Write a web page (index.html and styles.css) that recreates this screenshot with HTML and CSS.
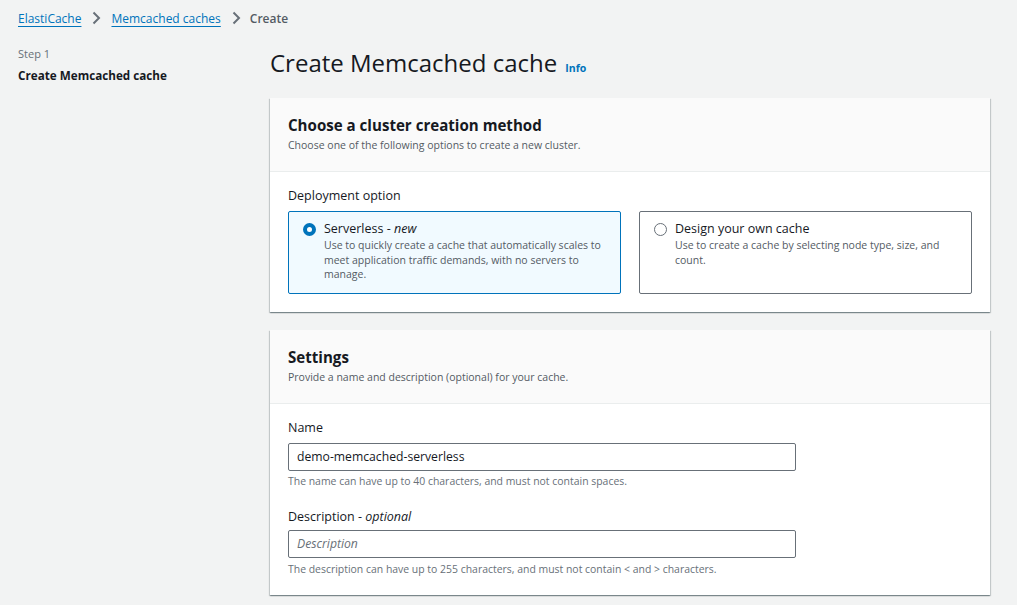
FILE: index.html
```html
<!DOCTYPE html>
<html>
<head>
<meta charset="utf-8">
<link rel="stylesheet" href="styles.css">
</head>
<body>
<nav class="crumbs">
  <a href="#" class="crumb-link">ElastiCache</a>
  <svg class="chev" width="16" height="16" viewBox="0 0 16 16"><path d="M5.5 2.5 11 8l-5.5 5.5" fill="none" stroke="#687078" stroke-width="2"/></svg>
  <a href="#" class="crumb-link">Memcached caches</a>
  <svg class="chev chev-last" width="16" height="16" viewBox="0 0 16 16"><path d="M5.5 2.5 11 8l-5.5 5.5" fill="none" stroke="#687078" stroke-width="2"/></svg>
  <span class="crumb-current">Create</span>
</nav>
<div class="layout">
  <aside class="steps">
    <div class="step-num">Step 1</div>
    <div class="step-title">Create Memcached cache</div>
  </aside>
  <main class="main">
    <div class="page-head">
      <h1 class="page-title">Create Memcached cache</h1>
      <a href="#" class="info">Info</a>
    </div>
    <section class="card">
      <header class="card-head">
        <h2 class="card-title">Choose a cluster creation method</h2>
        <p class="card-desc">Choose one of the following options to create a new cluster.</p>
      </header>
      <div class="card-body card-body-1">
        <div class="label">Deployment option</div>
        <div class="tiles">
          <div class="tile tile-selected">
            <span class="radio radio-on"></span>
            <div class="tile-text">
              <div class="tile-label">Serverless - <em>new</em></div>
              <div class="tile-desc">Use to quickly create a cache that automatically scales to meet application traffic demands, with no servers to manage.</div>
            </div>
          </div>
          <div class="tile">
            <span class="radio"></span>
            <div class="tile-text">
              <div class="tile-label">Design your own cache</div>
              <div class="tile-desc">Use to create a cache by selecting node type, size, and count.</div>
            </div>
          </div>
        </div>
      </div>
    </section>
    <section class="card">
      <header class="card-head">
        <h2 class="card-title">Settings</h2>
        <p class="card-desc">Provide a name and description (optional) for your cache.</p>
      </header>
      <div class="card-body card-body-2">
        <div class="field">
          <div class="label">Name</div>
          <div class="input">demo-memcached-serverless</div>
          <div class="hint">The name can have up to 40 characters, and must not contain spaces.</div>
        </div>
        <div class="field field-2">
          <div class="label">Description - <em>optional</em></div>
          <div class="input placeholder">Description</div>
          <div class="hint">The description can have up to 255 characters, and must not contain &lt; and &gt; characters.</div>
        </div>
      </div>
    </section>
  </main>
</div>
</body>
</html>
```
FILE: styles.css
```css
* { box-sizing: border-box; }
html, body { margin: 0; padding: 0; }
body {
  background: #f2f3f3;
  font-family: "Open Sans", "Noto Sans", sans-serif;
  color: #16191f;
  width: 1017px;
  height: 605px;
  overflow: hidden;
}
.crumbs {
  display: flex;
  align-items: center;
  padding: 9px 0 0 18px;
  height: 27px;
  font-size: 12px;
}
.crumb-link {
  color: #0073bb;
  text-decoration: underline;
  text-underline-offset: 3px;
}
.chev { margin: 0 7px 0 7px; }
.chev-last { margin-right: 6px; }
.crumb-current { color: #545b64; font-weight: 600; }
.layout {
  display: flex;
  padding-top: 19px;
}
.steps {
  width: 270px;
  padding-left: 18px;
}
.step-num { font-size: 11px; color: #687078; line-height: 15px; }
.step-title { font-size: 11.7px; font-weight: 700; margin-top: 6px; line-height: 16px; }
.main { width: 720px; }
.page-head {
  display: flex;
  align-items: baseline;
  gap: 8px;
  height: 52px;
}
.page-title {
  margin: 0;
  font-size: 24px;
  font-weight: 400;
  line-height: 34px;
}
.info { color: #0073bb; font-size: 10.5px; font-weight: 700; text-decoration: none; }
.card {
  background: #fff;
  box-shadow: 0 1px 1px 0 rgba(0,28,36,.3), 1px 1px 1px 0 rgba(0,28,36,.15), -1px 1px 1px 0 rgba(0,28,36,.15);
  margin-bottom: 18px;
}
.card-head {
  background: #fafafa;
  border-bottom: 1px solid #eaeded;
  padding: 17px 18px 0;
  height: 74px;
}
.card-title { margin: 0; font-size: 15.1px; font-weight: 700; line-height: 20px; }
.card-desc { margin: 2px 0 0; font-size: 10.5px; color: #545b64; line-height: 16px; }
.card-body { padding: 0 18px; }
.card-body-1 { padding-top: 15px; height: 140px; }
.card-body-2 { padding-top: 15px; height: 191px; }
.label { font-size: 12.5px; line-height: 18px; color: #16191f; }
.tiles {
  display: grid;
  grid-template-columns: 1fr 1fr;
  gap: 18px;
  margin-top: 6px;
}
.tile {
  border: 1px solid #687078;
  border-radius: 2px;
  height: 83px;
  display: flex;
  padding: 8px 14px 0 14px;
  gap: 8px;
}
.tile-selected { background: #f1faff; border-color: #0073bb; }
.radio {
  width: 13px; height: 13px;
  border-radius: 50%;
  border: 1px solid #687078;
  margin-top: 3px;
  flex: none;
  background: #fff;
}
.radio-on { border: 4px solid #0073bb; }
.tile-label { font-size: 12.5px; line-height: 18px; }
.tile-desc { font-size: 10.5px; line-height: 14.5px; color: #545b64; margin-top: 0; }
.input {
  width: 508px;
  height: 28px;
  border: 1px solid #687078;
  border-radius: 2px;
  margin-top: 6px;
  padding: 0 8px;
  font-size: 12.2px;
  line-height: 26px;
  background: #fff;
}
.placeholder { color: #687078; font-style: italic; }
.hint { font-size: 10.45px; color: #687078; line-height: 14px; margin-top: 3px; }
.field-2 { margin-top: 20px; }
.field-2 .input { margin-top: 4px; }
.field-2 .hint { margin-top: 4px; }
```
